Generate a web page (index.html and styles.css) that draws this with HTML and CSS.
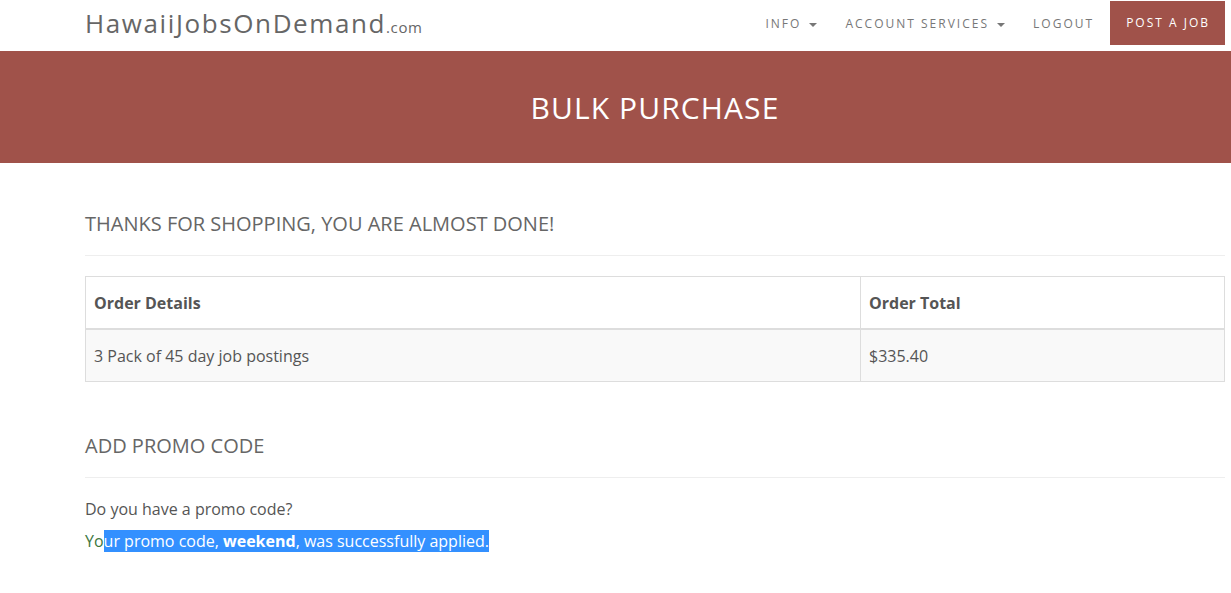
FILE: index.html
```html
<!DOCTYPE html>
<html lang="en">

<head>
    <meta charset="UTF-8" />
    <meta name="viewport" content="width=device-width, initial-scale=1.0" />
    <title>Bulk Purchase | HawaiiJobsOnDemand.com</title>
    <link rel="stylesheet" href="styles.css">
</head>

<body>
    <nav class="navbar">
        <a class="brand" href="#">HawaiiJobsOnDemand<span class="brand-tld">.com</span></a>
        <ul class="nav-links">
            <li><a href="#">Info <span class="caret"></span></a></li>
            <li><a href="#">Account Services <span class="caret"></span></a></li>
            <li><a href="#">Logout</a></li>
            <li><a class="post-job" href="#">Post a Job</a></li>
        </ul>
    </nav>

    <header class="banner">
        <h1>Bulk Purchase</h1>
    </header>

    <main class="content">
        <h3 class="section-title">Thanks for shopping, you are almost done!</h3>

        <table class="order-table">
            <thead>
                <tr>
                    <th class="col-details">Order Details</th>
                    <th>Order Total</th>
                </tr>
            </thead>
            <tbody>
                <tr>
                    <td>3 Pack of 45 day job postings</td>
                    <td>$335.40</td>
                </tr>
            </tbody>
        </table>

        <h3 class="section-title promo-title">Add Promo Code</h3>

        <p class="promo-question">Do you have a promo code?</p>
        <p class="promo-success">Yo<span class="selected">ur promo code, <strong>weekend</strong>, was successfully applied.</span></p>
    </main>
</body>

</html>
```

FILE: styles.css
```css
body {
    font-family: 'Open Sans', 'Noto Sans', sans-serif;
    margin: 0;
    padding: 0;
    background-color: #fff;
    color: #555;
    font-size: 16px;
}

a {
    text-decoration: none;
}

/* Navbar */
.navbar {
    height: 51px;
    display: flex;
    align-items: flex-start;
    justify-content: space-between;
    padding: 0 6px 0 85px;
}

.brand {
    font-size: 26px;
    color: #666;
    letter-spacing: 1.6px;
    line-height: 47px;
}

.brand-tld {
    font-size: 15px;
    letter-spacing: 0.6px;
}

.nav-links {
    list-style: none;
    margin: 0;
    padding: 0;
    display: flex;
}

.nav-links a {
    display: block;
    font-size: 12px;
    text-transform: uppercase;
    letter-spacing: 2px;
    color: #777;
    padding: 0 14px;
    line-height: 48px;
}

.caret {
    display: inline-block;
    width: 0;
    height: 0;
    margin-left: 3px;
    vertical-align: middle;
    border-top: 4px solid #777;
    border-left: 4px solid transparent;
    border-right: 4px solid transparent;
}

.nav-links .post-job {
    background-color: #a0524a;
    color: #fff;
    margin-top: 1px;
    line-height: 44px;
    padding: 0 15px 0 16px;
    margin-left: 2px;
}

/* Banner */
.banner {
    background-color: #a0524a;
    height: 112px;
    display: flex;
    justify-content: center;
    padding: 0 6px 0 85px;
}

.banner h1 {
    margin: 0;
    padding-top: 36px;
    font-size: 30px;
    font-weight: 400;
    color: #fff;
    letter-spacing: 1.1px;
    text-transform: uppercase;
    line-height: 42px;
}

/* Content */
.content {
    padding: 48px 6px 0 85px;
}

.section-title {
    margin: 0 0 20px;
    padding-bottom: 18px;
    font-size: 20px;
    font-weight: 400;
    color: #666;
    text-transform: uppercase;
    border-bottom: 1px solid #eee;
    line-height: 26px;
}

.order-table {
    width: 100%;
    border-collapse: collapse;
    border: 1px solid #ddd;
}

.order-table th,
.order-table td {
    text-align: left;
    border: 1px solid #ddd;
    padding: 0 8px;
    line-height: 24px;
}

.order-table th {
    height: 51px;
    font-weight: 700;
    color: #555;
    border-bottom-width: 2px;
}

.order-table td {
    height: 51px;
    background-color: #f9f9f9;
}

.col-details {
    width: 758px;
}

.promo-title {
    margin-top: 51px;
}

.promo-question {
    margin: 0 0 10px;
    line-height: 22px;
}

.promo-success {
    margin: 0;
    color: #3c763d;
    line-height: 22px;
}

.selected {
    background-color: #3390ff;
    color: #fff;
}
```
